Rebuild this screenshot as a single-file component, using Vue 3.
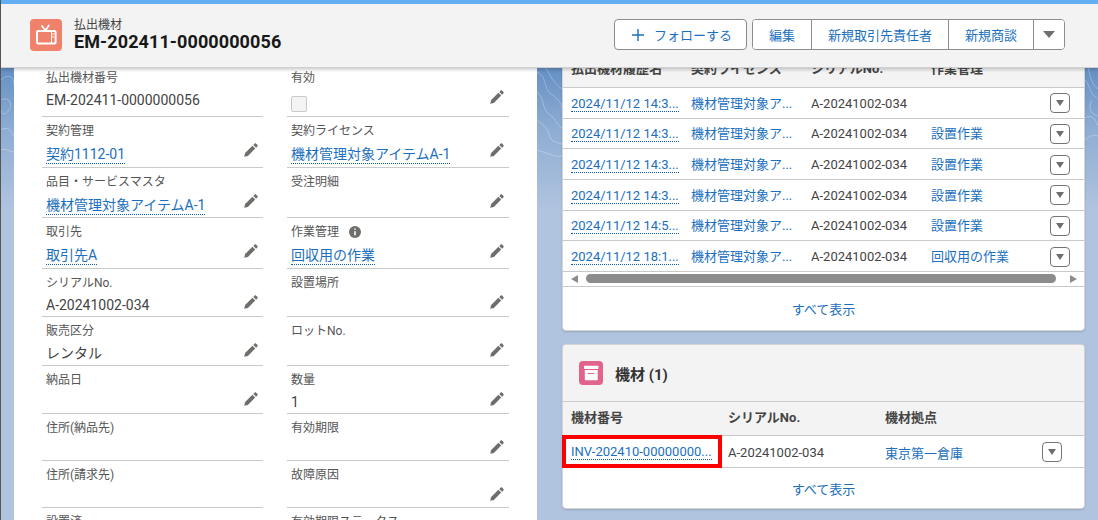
<script setup>
const fields = [
  [
    { label: '払出機材番号', value: 'EM-202411-0000000056', noEdit: true },
    { label: '有効', checkbox: true },
  ],
  [
    { label: '契約管理', value: '契約1112-01', link: true },
    { label: '契約ライセンス', value: '機材管理対象アイテムA-1', link: true },
  ],
  [
    { label: '品目・サービスマスタ', value: '機材管理対象アイテムA-1', link: true },
    { label: '受注明細' },
  ],
  [
    { label: '取引先', value: '取引先A', link: true },
    { label: '作業管理', value: '回収用の作業', link: true, info: true },
  ],
  [
    { label: 'シリアルNo.', value: 'A-20241002-034' },
    { label: '設置場所' },
  ],
  [
    { label: '販売区分', value: 'レンタル' },
    { label: 'ロットNo.' },
  ],
  [
    { label: '納品日' },
    { label: '数量', value: '1' },
  ],
  [
    { label: '住所(納品先)', noEdit: true },
    { label: '有効期限' },
  ],
  [
    { label: '住所(請求先)', noEdit: true },
    { label: '故障原因' },
  ],
  [
    { label: '設置済', noEdit: true },
    { label: '有効期限ステータス', noEdit: true },
  ],
].flat()

const historyRows = [
  { date: '2024/11/12 14:3...', work: '' },
  { date: '2024/11/12 14:3...', work: '設置作業' },
  { date: '2024/11/12 14:3...', work: '設置作業' },
  { date: '2024/11/12 14:3...', work: '設置作業' },
  { date: '2024/11/12 14:5...', work: '設置作業' },
  { date: '2024/11/12 18:1...', work: '回収用の作業' },
]
const historyHead = ['払出機材履歴名', '契約ライセンス', 'シリアルNo.', '作業管理']
</script>

<template>
  <div class="page">
    <svg class="topo" width="1098" height="520" viewBox="0 0 1098 520" fill="none" stroke="#fff" stroke-opacity=".28" stroke-width="1">
      <path d="M1 80c9-8 13-2 13 6M1 100c8-4 12 4 8 10s-8 4-8 0M1 130c6-4 10 0 13 6M1 150c5-2 9 2 13 2" />
      <path d="M537 72c10 4 6 16 14 22s12 10 11 18M537 92c8 6 4 16 12 22s8 12 13 14M545 67c6 8 6 14 17 22M537 120c6 6 10 6 12 14s6 8 13 10M537 150c8 2 18 8 25 6" />
      <path d="M1085 80c6 6 4 14 12 18M1088 67c2 10 4 18 10 22M1085 118c6-4 10 0 13 8M1085 140c4-4 10-6 13-4M1092 100c-4 8-2 14 6 16" />
    </svg>

    <header class="top">
      <div class="identity">
        <span class="obj-icon">
          <svg width="32" height="32" viewBox="0 0 32 32" fill="none" stroke="#fff">
            <path d="M12 7l3.4 4.4 3.4-5" stroke-width="1.7" stroke-linecap="round" stroke-linejoin="round" />
            <rect x="7" y="12" width="18.6" height="12.4" rx="1.2" stroke-width="2" />
            <path d="M21.5 12.5v11.5" stroke-width="1" />
            <path d="M23 15v.1M23 18v.1" stroke-width="1.6" stroke-linecap="round" />
          </svg>
        </span>
        <div class="names">
          <div class="obj-name">払出機材</div>
          <div class="rec-name">EM-202411-0000000056</div>
        </div>
      </div>
      <div class="actions">
        <button class="btn follow">
          <svg width="12" height="12" viewBox="0 0 12 12" stroke="#1b6fc0" stroke-width="1.4"><path d="M6 0v12M0 6h12" /></svg>
          <span>フォローする</span>
        </button>
        <div class="btn-group">
          <button class="btn seg">編集</button>
          <button class="btn seg">新規取引先責任者</button>
          <button class="btn seg">新規商談</button>
          <button class="btn seg more"><i class="tri big"></i></button>
        </div>
      </div>
    </header>

    <main class="body">
      <section class="detail">
        <div class="fields">
          <div v-for="(f, i) in fields" :key="i" class="field">
            <div class="label">
              <span>{{ f.label }}</span>
              <svg v-if="f.info" class="info" width="12" height="12" viewBox="0 0 12 12">
                <circle cx="6" cy="6" r="6" fill="#706e6b" />
                <path d="M6 2.4v1.4M6 5.2v4" stroke="#fff" stroke-width="1.6" />
              </svg>
            </div>
            <div class="val-row">
              <span v-if="f.checkbox" class="check"></span>
              <span v-else-if="f.link" class="val link">{{ f.value }}</span>
              <span v-else-if="f.value" class="val">{{ f.value }}</span>
              <svg v-if="!f.noEdit" class="pencil" width="14" height="14" viewBox="0 0 14 14" fill="#706e6b">
                <path d="M0.2 13.8l.9-3.7 7.3-7.3 2.8 2.8-7.3 7.3z" />
                <path d="M9.3 1.9l1.2-1.2c.5-.5 1.2-.5 1.7 0l1.1 1.1c.5.5.5 1.2 0 1.7l-1.2 1.2z" />
              </svg>
            </div>
          </div>
        </div>
      </section>

      <div class="side">
        <section class="card history">
          <div class="t-row t-head">
            <span v-for="h in historyHead" :key="h" class="cell">{{ h }}</span>
          </div>
          <div v-for="(r, i) in historyRows" :key="i" class="t-row">
            <span class="cell"><a class="dotted">{{ r.date }}</a></span>
            <span class="cell blue">機材管理対象ア...</span>
            <span class="cell">A-20241002-034</span>
            <span class="cell blue">{{ r.work }}</span>
            <span class="row-btn"><i class="tri"></i></span>
          </div>
          <div class="scroll">
            <i class="arrow left"></i>
            <span class="thumb"></span>
            <i class="arrow right"></i>
          </div>
          <div class="all first">すべて表示</div>
        </section>

        <section class="card equipment">
          <div class="eq-title">
            <span class="box-icon">
              <svg width="24" height="24" viewBox="0 0 24 24" fill="#fff">
                <rect x="5" y="4.7" width="14.4" height="3.4" rx=".6" />
                <path d="M5.8 9h12.9v9.4c0 .4-.4.8-.8.8H6.6c-.4 0-.8-.4-.8-.8zM9 12v1h6.2v-1z" fill-rule="evenodd" />
              </svg>
            </span>
            <h2>機材 (1)</h2>
          </div>
          <div class="e-row e-head">
            <span class="e-cell first-cell">機材番号</span>
            <span class="e-cell">シリアルNo.</span>
            <span class="e-cell">機材拠点</span>
          </div>
          <div class="e-row e-body">
            <span class="e-cell highlighted"><a class="dotted">INV-202410-00000000...</a></span>
            <span class="e-cell">A-20241002-034</span>
            <span class="e-cell blue">東京第一倉庫</span>
            <span class="row-btn"><i class="tri"></i></span>
          </div>
          <div class="all second">すべて表示</div>
        </section>
      </div>
    </main>
  </div>
</template>

<style>
html, body { margin: 0; background: #b0c4df; overflow: hidden; }
</style>

<style scoped>
.page {
  position: relative;
  width: 1098px;
  height: 520px;
  overflow: hidden;
  box-sizing: border-box;
  border-left: 1px solid #555;
  background: linear-gradient(#5f8cc2 60px, #8fadd3 130px, #b0c4df 210px);
  font-family: Roboto, "Noto Sans CJK JP", sans-serif;
  font-size: 13px;
  color: #444;
}
.topo { position: absolute; left: -1px; top: 0; }
.top {
  position: absolute;
  z-index: 5;
  left: 0;
  right: 0;
  top: 0;
  height: 68px;
  box-sizing: border-box;
  border-top: 4px solid #63aef5;
  border-bottom: 1px solid #d0d0d0;
  background: #f3f3f3;
  box-shadow: 0 2px 3px rgba(0, 0, 0, .18);
  display: flex;
  align-items: center;
  justify-content: space-between;
  padding: 0 33px 2px 29px;
}
.identity { display: flex; align-items: center; gap: 12px; }
.obj-icon { width: 32px; height: 32px; border-radius: 4px; background: #f0826c; display: block; }
.obj-icon svg { display: block; }
.obj-name { font-size: 12px; line-height: 14px; color: #444; }
.rec-name { font-size: 18px; line-height: 20px; font-weight: 700; color: #181818; letter-spacing: .1px; }
.actions { display: flex; gap: 5px; }
.btn {
  font: inherit;
  font-size: 13px;
  color: #1b6fc0;
  background: #fff;
  border: 0;
  padding: 0 16px;
  height: 31px;
  white-space: nowrap;
}
.follow {
  border: 1px solid #8c8c8c;
  border-radius: 4px;
  width: 133px;
  padding: 0 0 0 17px;
  display: flex;
  align-items: center;
  gap: 10px;
}
.btn-group {
  display: flex;
  border: 1px solid #8c8c8c;
  border-radius: 4px;
  overflow: hidden;
  height: 31px;
  box-sizing: border-box;
  background: #fff;
}
.seg { border-right: 1px solid #8c8c8c; height: 29px; }
.seg.more { border-right: 0; width: 30px; padding: 0; display: flex; align-items: center; justify-content: center; }
.tri {
  display: block;
  width: 0;
  height: 0;
  border-left: 4.5px solid transparent;
  border-right: 4.5px solid transparent;
  border-top: 6px solid #706e6b;
}
.tri.big { border-left-width: 6px; border-right-width: 6px; border-top-width: 7px; }

.body {
  position: relative;
  display: flex;
  gap: 25px;
  padding-left: 13px;
}
.detail {
  width: 523px;
  height: 520px;
  background: #fff;
  box-sizing: border-box;
  padding: 64px 28px 0;
  overflow: hidden;
}
.fields {
  display: grid;
  grid-template-columns: 221px 222px;
  column-gap: 24px;
  grid-template-rows: 53px 51px 50px 51px 48px 49px 48px 47px 47px 40px;
}
.field {
  box-sizing: border-box;
  border-bottom: 1px solid #c9c9c9;
  padding: 5px 5px 0 4px;
}
.label {
  display: flex;
  align-items: center;
  gap: 10px;
  font-size: 12px;
  line-height: 18px;
  color: #555;
  height: 18px;
}
.val-row {
  display: flex;
  justify-content: flex-end;
  align-items: flex-start;
  margin-top: 3px;
  min-height: 20px;
}
.val { margin-right: auto; font-size: 14px; line-height: 20px; color: #444; }
.val.link {
  color: #1b6fc0;
  line-height: 17px;
  margin-top: 3px;
  border-bottom: 1px dotted #0b5cab;
}
.check {
  margin-right: auto;
  margin-top: 6px;
  width: 14px;
  height: 14px;
  border: 1px solid #c9c9c9;
  border-radius: 2px;
  background: #f3f3f3;
}
.pencil { flex: none; }

.side { width: 523px; display: flex; flex-direction: column; gap: 13px; padding-top: 50px; }
.card {
  box-sizing: border-box;
  background: #fff;
  border: 1px solid #d4d4d4;
  border-radius: 4px;
  box-shadow: 0 1px 2px rgba(0, 0, 0, .15);
}
.history { height: 281px; overflow: hidden; }
.t-row {
  position: relative;
  display: grid;
  grid-template-columns: 120px 120px 120px 1fr 34px;
  align-items: center;
  height: 30.67px;
  box-sizing: border-box;
  padding-top: 1px;
  border-bottom: 1px solid #c9c9c9;
}
.t-head {
  height: 37px;
  padding: 0 0 2px;
  background: #f3f3f3;
  font-weight: 700;
  color: #444;
  grid-template-columns: 120px 120px 120px 1fr;
}
.cell { padding-left: 8px; font-size: 13px; line-height: 18px; white-space: nowrap; padding-top: 1px; }
.blue { color: #1b6fc0; }
.dotted { color: #1b6fc0; border-bottom: 1px dotted #0b5cab; }
.row-btn {
  display: flex;
  align-items: center;
  justify-content: center;
  width: 20px;
  height: 20px;
  box-sizing: border-box;
  border: 1px solid #747474;
  border-radius: 4px;
  background: #fff;
}
.scroll {
  display: flex;
  align-items: center;
  height: 15px;
  box-sizing: border-box;
  border-bottom: 1px solid #c9c9c9;
  padding: 0 7px 0 8px;
}
.thumb { flex: 1; height: 9px; border-radius: 5px; background: #8c8c8c; margin: 0 14px 0 8px; }
.arrow { width: 0; height: 0; border-top: 4.5px solid transparent; border-bottom: 4.5px solid transparent; }
.arrow.left { border-right: 7px solid #8c8c8c; }
.arrow.right { border-left: 7px solid #8c8c8c; }
.all { text-align: center; font-size: 13px; color: #1b6fc0; }
.all.first { line-height: 46px; }
.all.second { line-height: 44px; }

.equipment { height: 165px; }
.eq-title {
  height: 57px;
  box-sizing: border-box;
  background: #f3f3f3;
  border-bottom: 1px solid #c9c9c9;
  border-radius: 3px 3px 0 0;
  display: flex;
  align-items: center;
  gap: 12px;
  padding-left: 16px;
}
.box-icon { width: 24px; height: 24px; border-radius: 4px; background: #e3648a; }
.box-icon svg { display: block; }
.eq-title h2 { margin: 0; font-size: 15px; font-weight: 700; color: #333; }
.e-row {
  display: grid;
  grid-template-columns: 159px 157px 157px 1fr;
  align-items: center;
  box-sizing: border-box;
  border-bottom: 1px solid #c9c9c9;
}
.e-head { height: 34px; background: #f3f3f3; font-weight: 700; padding-bottom: 4px; }
.e-body { height: 32px; }
.e-cell { padding-left: 6px; font-size: 13px; white-space: nowrap; }
.first-cell { padding-left: 8px; }
.highlighted {
  height: 33px;
  box-sizing: border-box;
  margin: -1px 0 0 -1px;
  border: 4px solid #f00;
  padding-left: 5px;
  line-height: 25px;
}
.e-body .row-btn { margin-left: 6px; }
</style>
